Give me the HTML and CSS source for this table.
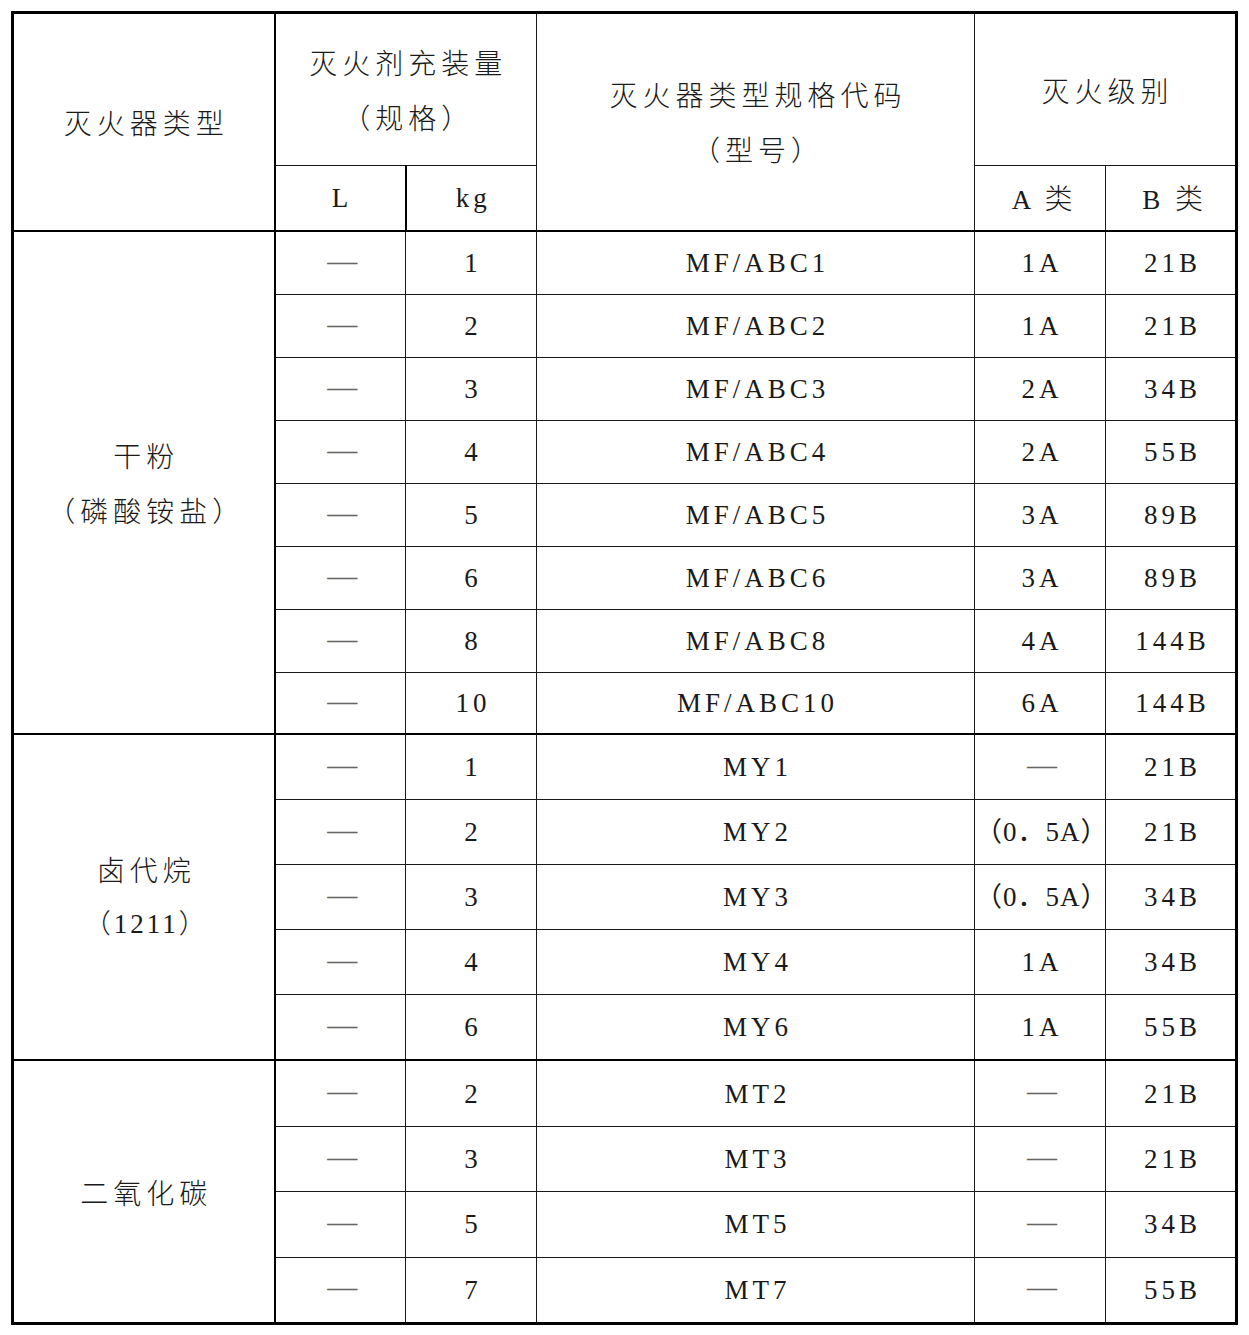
FILE: index.html
```html
<!DOCTYPE html>
<html lang="zh-CN">
<head>
<meta charset="utf-8">
<title>灭火器类型</title>
<link rel="stylesheet" href="styles.css">
</head>
<body>
<table class="spec">
  <colgroup>
    <col class="c-type">
    <col class="c-l">
    <col class="c-kg">
    <col class="c-code">
    <col class="c-a">
    <col class="c-b">
  </colgroup>
  <thead>
    <tr class="h1">
      <th rowspan="2" class="zh">灭火器类型</th>
      <th colspan="2" class="zh two"><span class="ln">灭火剂充装量</span><span class="ln">（规格）</span></th>
      <th rowspan="2" class="zh two"><span class="ln">灭火器类型规格代码</span><span class="ln">（型号）</span></th>
      <th colspan="2" class="zh">灭火级别</th>
    </tr>
    <tr class="h2">
      <th class="lat">L</th>
      <th class="lat">kg</th>
      <th class="lat">A <span class="zh">类</span></th>
      <th class="lat">B <span class="zh">类</span></th>
    </tr>
  </thead>
  <tbody class="g1">
    <tr><td rowspan="8" class="zh two grp"><span class="ln">干粉</span><span class="ln">（磷酸铵盐）</span></td><td><span class="dash">—</span></td><td>1</td><td>MF/ABC1</td><td>1A</td><td>21B</td></tr>
    <tr><td><span class="dash">—</span></td><td>2</td><td>MF/ABC2</td><td>1A</td><td>21B</td></tr>
    <tr><td><span class="dash">—</span></td><td>3</td><td>MF/ABC3</td><td>2A</td><td>34B</td></tr>
    <tr><td><span class="dash">—</span></td><td>4</td><td>MF/ABC4</td><td>2A</td><td>55B</td></tr>
    <tr><td><span class="dash">—</span></td><td>5</td><td>MF/ABC5</td><td>3A</td><td>89B</td></tr>
    <tr><td><span class="dash">—</span></td><td>6</td><td>MF/ABC6</td><td>3A</td><td>89B</td></tr>
    <tr><td><span class="dash">—</span></td><td>8</td><td>MF/ABC8</td><td>4A</td><td>144B</td></tr>
    <tr class="last"><td><span class="dash">—</span></td><td>10</td><td>MF/ABC10</td><td>6A</td><td>144B</td></tr>
  </tbody>
  <tbody class="g2">
    <tr><td rowspan="5" class="zh two grp"><span class="ln">卤代烷</span><span class="ln lat">（1211）</span></td><td><span class="dash">—</span></td><td>1</td><td>MY1</td><td><span class="dash">—</span></td><td>21B</td></tr>
    <tr><td><span class="dash">—</span></td><td>2</td><td>MY2</td><td class="paren">（0．5A）</td><td>21B</td></tr>
    <tr><td><span class="dash">—</span></td><td>3</td><td>MY3</td><td class="paren">（0．5A）</td><td>34B</td></tr>
    <tr><td><span class="dash">—</span></td><td>4</td><td>MY4</td><td>1A</td><td>34B</td></tr>
    <tr><td><span class="dash">—</span></td><td>6</td><td>MY6</td><td>1A</td><td>55B</td></tr>
  </tbody>
  <tbody class="g3">
    <tr><td rowspan="4" class="zh grp">二氧化碳</td><td><span class="dash">—</span></td><td>2</td><td>MT2</td><td><span class="dash">—</span></td><td>21B</td></tr>
    <tr><td><span class="dash">—</span></td><td>3</td><td>MT3</td><td><span class="dash">—</span></td><td>21B</td></tr>
    <tr><td><span class="dash">—</span></td><td>5</td><td>MT5</td><td><span class="dash">—</span></td><td>34B</td></tr>
    <tr><td><span class="dash">—</span></td><td>7</td><td>MT7</td><td><span class="dash">—</span></td><td>55B</td></tr>
  </tbody>
</table>
</body>
</html>
```

FILE: styles.css
```css
html, body {
  margin: 0;
  padding: 0;
  background: #ffffff;
}

.spec {
  border-collapse: collapse;
  table-layout: fixed;
  width: 1226px;
  margin: 11px 0 0 11px;
  border: 3px solid #000;
  font-family: "Liberation Serif", "Noto Sans CJK SC", serif;
  font-size: 27px;
  color: #1a1a1a;
}

.c-type { width: 262px; }
.c-l { width: 131px; }
.c-kg { width: 131px; }
.c-code { width: 438px; }
.c-a { width: 131px; }
.c-b { width: 131px; }

.spec th,
.spec td {
  border: 1px solid #1a1a1a;
  padding: 0 0 0 4px;
  text-align: center;
  vertical-align: middle;
  font-weight: normal;
  letter-spacing: 4px;
  white-space: nowrap;
  line-height: 30px;
}

.spec .zh {
  font-family: "Noto Sans CJK SC", sans-serif;
  font-size: 28px;
  font-weight: 300;
  letter-spacing: 5px;
  padding-left: 5px;
}

.spec .lat .zh {
  padding-left: 0;
  letter-spacing: 0;
}

.spec .two .ln {
  display: block;
  line-height: 55px;
}

.spec .ln.lat {
  font-family: "Liberation Serif", "Noto Sans CJK SC", serif;
  font-size: 27px;
  letter-spacing: 3px;
}

.h1 th { height: 151px; }
.h2 th { height: 64px; }

thead { border-bottom: 2px solid #000; }
.g1 td { height: 62px; }
.g1 .last td { height: 60px; }
.g2 td { height: 64.1px; }
.g3 td { height: 64.4px; }
.g1, .g2 { border-bottom: 2px solid #000; }
.spec td.grp { border-right: 2px solid #000; }
.spec thead th:first-child { border-right: 2px solid #000; }

.dash {
  font-size: 30px;
  letter-spacing: 0;
  color: #666;
  display: inline-block;
  transform: translateY(-2px);
}

.spec td.paren {
  font-family: "Liberation Serif", "Noto Sans CJK SC", serif;
  letter-spacing: 1px;
  padding-left: 0;
}
```
